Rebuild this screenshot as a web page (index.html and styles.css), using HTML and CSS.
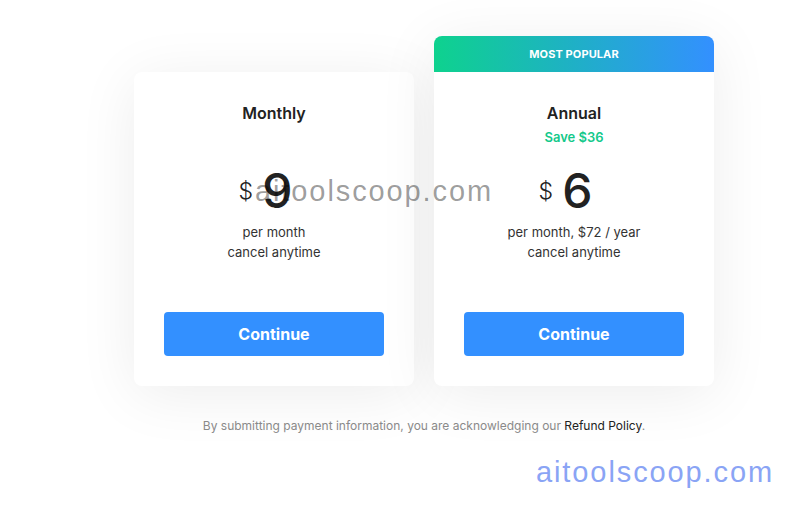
FILE: index.html
```html
<!DOCTYPE html>
<html lang="en">
<head>
<meta charset="utf-8">
<title>Pricing</title>
<link rel="stylesheet" href="styles.css">
</head>
<body>
<main class="page">
  <div class="plans">
    <section class="card">
      <div class="card-body">
        <h2 class="plan-title">Monthly</h2>
        <div class="plan-save"></div>
        <div class="price"><span class="currency">$</span><span class="amount">9</span></div>
        <p class="price-note">per month<br>cancel anytime</p>
        <button class="btn">Continue</button>
      </div>
    </section>
    <section class="card card-popular">
      <div class="badge">MOST POPULAR</div>
      <div class="card-body">
        <h2 class="plan-title">Annual</h2>
        <div class="plan-save">Save $36</div>
        <div class="price"><span class="currency">$</span><span class="amount">6</span></div>
        <p class="price-note">per month, $72 / year<br>cancel anytime</p>
        <button class="btn">Continue</button>
      </div>
    </section>
  </div>
  <p class="legal">By submitting payment information, you are acknowledging our <a class="legal-link" href="#">Refund Policy</a>.</p>
</main>
<div class="watermark watermark-center">aitoolscoop.com</div>
<div class="watermark watermark-corner">aitoolscoop.com</div>
</body>
</html>
```

FILE: styles.css
```css
* { box-sizing: border-box; }

html, body {
  margin: 0;
  padding: 0;
  background: #ffffff;
}

body {
  font-family: Inter, "Noto Sans", sans-serif;
  color: #222222;
  width: 791px;
  height: 510px;
  overflow: hidden;
  position: relative;
}

.page {
  width: 580px;
  margin-left: 134px;
  padding-top: 36px;
}

.plans {
  display: flex;
  align-items: flex-end;
  gap: 20px;
}

.card {
  width: 280px;
  background: #ffffff;
  border-radius: 8px;
  box-shadow: 0 8px 60px rgba(0, 0, 0, 0.075);
  overflow: hidden;
}

.badge {
  height: 36px;
  display: flex;
  align-items: center;
  justify-content: center;
  background: linear-gradient(90deg, #0ed28e 0%, #1fb0c6 50%, #3390ff 100%);
  color: #ffffff;
  font-size: 11px;
  font-weight: 700;
  letter-spacing: 0.1px;
}

.card-body {
  padding: 30px 30px 30px;
  display: flex;
  flex-direction: column;
  align-items: center;
  text-align: center;
}

.plan-title {
  margin: 0;
  font-size: 16px;
  line-height: 22px;
  font-weight: 600;
  color: #222222;
}

.plan-save {
  margin-top: 4px;
  height: 18px;
  font-size: 13px;
  line-height: 18px;
  font-weight: 600;
  color: #14c98b;
}

.price {
  margin-top: 17px;
  height: 56px;
  display: flex;
  align-items: center;
  justify-content: center;
  gap: 9px;
  padding-right: 17px;
}

.currency {
  font-size: 23px;
  line-height: 1;
  font-weight: 300;
  color: #222222;
}

.amount {
  font-size: 48px;
  line-height: 1;
  font-weight: 500;
  color: #222222;
}

.price-note {
  margin: 3px 0 0;
  font-size: 13px;
  line-height: 20px;
  color: #333333;
}

.btn {
  margin-top: 50px;
  width: 220px;
  height: 44px;
  border: none;
  border-radius: 4px;
  background: #3390ff;
  color: #ffffff;
  font-family: inherit;
  font-size: 16px;
  font-weight: 700;
  cursor: pointer;
}

.legal {
  margin: 31px 0 0;
  text-align: center;
  font-size: 12px;
  line-height: 18px;
  color: #8a8a8a;
}

.legal-link {
  color: #222222;
  text-decoration: none;
}

.watermark {
  position: absolute;
  font-family: "Liberation Sans", Arial, sans-serif;
  font-size: 29px;
  line-height: 32px;
  letter-spacing: 1.9px;
  white-space: nowrap;
  pointer-events: none;
}

.watermark-center {
  left: 255px;
  top: 175px;
  color: rgba(0, 0, 0, 0.4);
}

.watermark-corner {
  left: 536px;
  top: 456px;
  color: #8aa4f5;
}
```
